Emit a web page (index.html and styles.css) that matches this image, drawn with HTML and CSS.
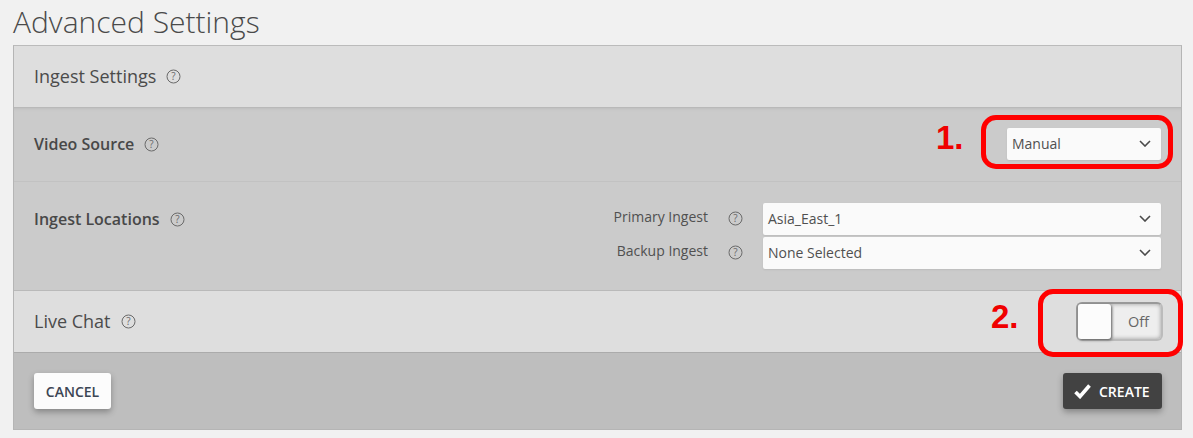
FILE: index.html
```html
<!DOCTYPE html>
<html lang="en">
<head>
    <meta charset="UTF-8">
    <title>Advanced Settings</title>
    <link rel="stylesheet" href="styles.css">
</head>
<body>
    <h1 class="page-title">Advanced Settings</h1>
    <div class="panel">
        <div class="row row-head">
            <span class="label-light">Ingest Settings</span>
            <svg class="help" viewBox="0 0 15 15"><circle cx="7.5" cy="7.5" r="6.5"/><text x="7.5" y="11" text-anchor="middle">?</text></svg>
        </div>
        <div class="row row-dark row-source">
            <span class="label-bold">Video Source</span>
            <svg class="help" viewBox="0 0 15 15"><circle cx="7.5" cy="7.5" r="6.5"/><text x="7.5" y="11" text-anchor="middle">?</text></svg>
            <div class="select select-small">
                <span>Manual</span>
                <svg class="chevron" viewBox="0 0 12 7"><path d="M1 1l5 5 5-5"/></svg>
            </div>
            <span class="note note-one">1.</span>
            <span class="ring ring-one"></span>
        </div>
        <div class="row row-dark row-locations">
            <div class="locations-title">
                <span class="label-bold">Ingest Locations</span>
                <svg class="help" viewBox="0 0 15 15"><circle cx="7.5" cy="7.5" r="6.5"/><text x="7.5" y="11" text-anchor="middle">?</text></svg>
            </div>
            <div class="ingest-grid">
                <span class="ingest-label">Primary Ingest</span>
                <svg class="help" viewBox="0 0 15 15"><circle cx="7.5" cy="7.5" r="6.5"/><text x="7.5" y="11" text-anchor="middle">?</text></svg>
                <div class="select">
                    <span>Asia_East_1</span>
                    <svg class="chevron" viewBox="0 0 12 7"><path d="M1 1l5 5 5-5"/></svg>
                </div>
                <span class="ingest-label">Backup Ingest</span>
                <svg class="help" viewBox="0 0 15 15"><circle cx="7.5" cy="7.5" r="6.5"/><text x="7.5" y="11" text-anchor="middle">?</text></svg>
                <div class="select">
                    <span>None Selected</span>
                    <svg class="chevron" viewBox="0 0 12 7"><path d="M1 1l5 5 5-5"/></svg>
                </div>
            </div>
        </div>
        <div class="row row-chat">
            <span class="label-light">Live Chat</span>
            <svg class="help" viewBox="0 0 15 15"><circle cx="7.5" cy="7.5" r="6.5"/><text x="7.5" y="11" text-anchor="middle">?</text></svg>
            <div class="toggle">
                <span class="toggle-knob"></span>
                <span class="toggle-text">Off</span>
            </div>
            <span class="note note-two">2.</span>
            <span class="ring ring-two"></span>
        </div>
        <div class="actions">
            <button class="btn btn-cancel">CANCEL</button>
            <button class="btn btn-create">
                <svg class="check" viewBox="0 0 17 15"><path d="M1.5 8l4.5 4.5 9.5-11"/></svg>
                CREATE
            </button>
        </div>
    </div>
</body>
</html>
```

FILE: styles.css
```css
* {
    box-sizing: border-box;
}

body {
    margin: 0;
    height: 438px;
    overflow: hidden;
    padding: 0 11px 0 13px;
    background: #f1f1f1;
    font-family: "Open Sans", sans-serif;
    color: #444;
}

.page-title {
    margin: 0;
    height: 45px;
    font-size: 30px;
    line-height: 43px;
    font-weight: 300;
    color: #4a4a4a;
}

.panel {
    height: 385px;
    border: 1px solid #b5b5b5;
    border-top-color: #bbb;
}

.row {
    position: relative;
    display: flex;
    align-items: center;
    padding-left: 20px;
    border-bottom: 1px solid #b9b9b9;
}

.row-head {
    height: 62px;
    background: #dedede;
}

.row-dark {
    background: #cbcbcb;
    border-bottom-color: #c0c0c0;
}

.row-source {
    height: 74px;
    border-bottom-color: #c2c2c2;
    box-shadow: inset 0 3px 3px -2px #bdbdbd;
}

.row-locations {
    height: 109px;
    align-items: flex-start;
    justify-content: space-between;
    padding-top: 26px;
    border-bottom-color: #b9b9b9;
}

.row-chat {
    height: 62px;
    background: #dedede;
    border-bottom-color: #ababab;
}

.label-light {
    font-size: 18px;
    line-height: 24px;
    margin-top: -2px;
    color: #4b4b4b;
}

.label-bold {
    font-size: 16px;
    font-weight: 600;
    color: #484848;
}

.row-source .label-bold {
    margin-top: -2px;
}

.help {
    width: 15px;
    height: 15px;
    margin-left: 10px;
    flex: none;
}

.help circle {
    fill: none;
    stroke: #6a6a6a;
    stroke-width: 1;
}

.help text {
    font-family: "Open Sans", sans-serif;
    font-size: 10px;
    fill: #6a6a6a;
}

.locations-title {
    display: flex;
    align-items: center;
}

.ingest-grid {
    display: grid;
    grid-template-columns: auto 15px 398px;
    column-gap: 20px;
    row-gap: 2px;
    align-items: center;
    margin-top: -5px;
    margin-right: 20px;
}

.ingest-grid .help {
    margin-left: 0;
    margin-top: -2px;
}

.ingest-grid .select {
    padding-bottom: 2px;
}

.ingest-label {
    font-size: 14px;
    color: #505050;
    text-align: right;
    margin-top: -6px;
}

.select {
    display: flex;
    align-items: center;
    justify-content: space-between;
    height: 32px;
    padding: 0 10px 0 5px;
    background: #fafafa;
    border-radius: 2px;
    box-shadow: 0 1px 2px rgba(0, 0, 0, .08);
    font-size: 14px;
    color: #505050;
}

.select-small {
    width: 154px;
    margin-left: auto;
    margin-right: 20px;
    margin-top: -2px;
}

.chevron {
    width: 12px;
    height: 7px;
}

.chevron path {
    fill: none;
    stroke: #4a4a4a;
    stroke-width: 1.6;
}

.note {
    position: absolute;
    font-family: "Liberation Sans", sans-serif;
    font-size: 33px;
    font-weight: 700;
    line-height: 36px;
    color: #f00000;
}

.note-one {
    left: 922px;
    top: 12px;
}

.note-two {
    left: 977px;
    top: 8px;
}

.ring {
    position: absolute;
    border: 5px solid #f00;
    border-radius: 15px;
}

.ring-one {
    left: 967px;
    top: 7px;
    width: 192px;
    height: 54px;
}

.ring-two {
    left: 1024px;
    top: -2px;
    width: 145px;
    height: 68px;
}

.toggle {
    display: flex;
    align-items: center;
    justify-content: space-between;
    width: 87px;
    height: 39px;
    margin-left: auto;
    margin-right: 18px;
    padding: 0 12px 0 0;
    background: #eee;
    border: 2px solid #999;
    border-right-color: #bbb;
    border-bottom-color: #bbb;
    border-radius: 6px;
    box-shadow: inset 0 0 4px #999;
}

.toggle-knob {
    width: 33px;
    height: 35px;
    background: #fcfcfc;
    border-radius: 3px;
    box-shadow: 1px 1px 3px #555;
}

.toggle-text {
    font-size: 14.5px;
    color: #666;
}

.actions {
    display: flex;
    align-items: center;
    justify-content: space-between;
    height: 76px;
    padding: 0 19px 0 20px;
    background: #bebebe;
}

.btn {
    display: flex;
    align-items: center;
    height: 36px;
    border: none;
    border-radius: 3px;
    font-family: "Open Sans", sans-serif;
    font-size: 14px;
    font-weight: 600;
    box-shadow: 0 3px 6px rgba(0, 0, 0, .3);
}

.btn-cancel {
    width: 77px;
    justify-content: center;
    background: #fcfcfc;
    color: #3c4654;
}

.btn-create {
    width: 99px;
    padding: 0 0 0 11px;
    background: #424242;
    color: #fff;
}

.check {
    width: 17px;
    height: 15px;
    margin-right: 8px;
}

.check path {
    fill: none;
    stroke: #fff;
    stroke-width: 3.6;
}
```
